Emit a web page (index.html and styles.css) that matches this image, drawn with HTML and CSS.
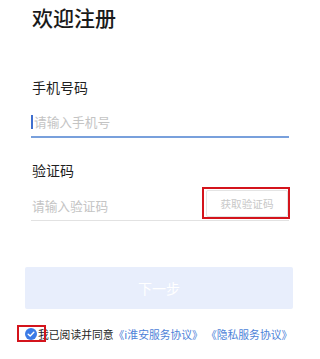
FILE: index.html
```html
<!DOCTYPE html>
<html lang="zh-CN">
<head>
<meta charset="utf-8">
<link rel="stylesheet" href="styles.css">
</head>
<body>
<div class="page">
  <h1 class="title">欢迎注册</h1>

  <div class="label label-phone">手机号码</div>
  <div class="row row-phone">
    <span class="cursor"></span><span class="ph">请输入手机号</span>
  </div>

  <div class="label label-code">验证码</div>
  <div class="row row-code">
    <span class="ph">请输入验证码</span>
    <span class="code-btn">获取验证码</span>
    <span class="mark mark-code"></span>
  </div>

  <div class="next">下一步</div>

  <div class="agree">
    <span class="check">
      <svg width="12" height="12" viewBox="0 0 12 12"><circle cx="6" cy="6" r="6" fill="#3a7ae6"/><path d="M3.2 6.2 L5.2 8 L8.8 4.3" fill="none" stroke="#fff" stroke-width="1.4" stroke-linecap="round" stroke-linejoin="round"/></svg>
    </span>
    <span class="agree-text">我已阅读并同意</span><span class="link">《i淮安服务协议》</span><span class="link link2">《隐私服务协议》</span>
    <span class="mark mark-check"></span>
  </div>
</div>
</body>
</html>
```

FILE: styles.css
```css
html, body {
  margin: 0;
  padding: 0;
  background: #fff;
}
body {
  font-family: "Noto Sans CJK SC", "Noto Sans", sans-serif;
  color: #1f1f1f;
  width: 320px;
  height: 359px;
  overflow: hidden;
}
.page {
  padding: 0 31px 0 31px;
}
.title {
  margin: 3px 0 0 1px;
  font-size: 21px;
  line-height: 28px;
  font-weight: 500;
  color: #1a1a1a;
}
.label {
  font-size: 14px;
  line-height: 20px;
  margin-left: 1px;
  color: #1f1f1f;
}
.label-phone {
  margin-top: 46px;
}
.row {
  display: flex;
  align-items: center;
  position: relative;
}
.row-phone {
  margin-top: 10px;
  height: 29px;
  border-bottom: 2px solid #78a0dc;
}
.cursor {
  width: 2px;
  height: 14px;
  background: #3f6fcf;
  margin-right: 1px;
}
.ph {
  font-size: 12.7px;
  color: #c4c4c4;
}
.label-code {
  margin-top: 22px;
}
.row-code {
  margin-top: 10px;
  height: 30px;
  border-bottom: 1px solid #e2e2e2;
  justify-content: space-between;
  align-items: flex-start;
}
.row-code .ph {
  margin-top: 6px;
  margin-left: 1px;
}
.code-btn {
  box-sizing: border-box;
  width: 82px;
  height: 27px;
  margin-right: 1px;
  border: 1px solid #e4e4e4;
  border-radius: 2px;
  font-size: 10.6px;
  color: #c8c8c8;
  display: flex;
  align-items: center;
  justify-content: center;
}
.mark {
  position: absolute;
  border: 2px solid #d4141c;
  box-sizing: border-box;
}
.mark-code {
  left: 171px;
  top: -3px;
  width: 88px;
  height: 32px;
}
.next {
  margin: 46px -4px 0 -6px;
  height: 42px;
  background: #e8eefc;
  border-radius: 2px;
  color: #fff;
  font-size: 14px;
  display: flex;
  align-items: center;
  justify-content: center;
}
.agree {
  position: relative;
  margin: 15px 0 0 -6px;
  height: 20px;
  display: flex;
  align-items: center;
  font-size: 10.8px;
  white-space: nowrap;
}
.check {
  display: flex;
  width: 12px;
  height: 12px;
  margin-right: 1px;
}
.agree-text {
  color: #1f1f1f;
}
.link {
  color: #4d82d8;
}
.link2 {
  margin-left: 3px;
}
.mark-check {
  left: -8px;
  top: 1px;
  width: 29px;
  height: 17px;
}
```
